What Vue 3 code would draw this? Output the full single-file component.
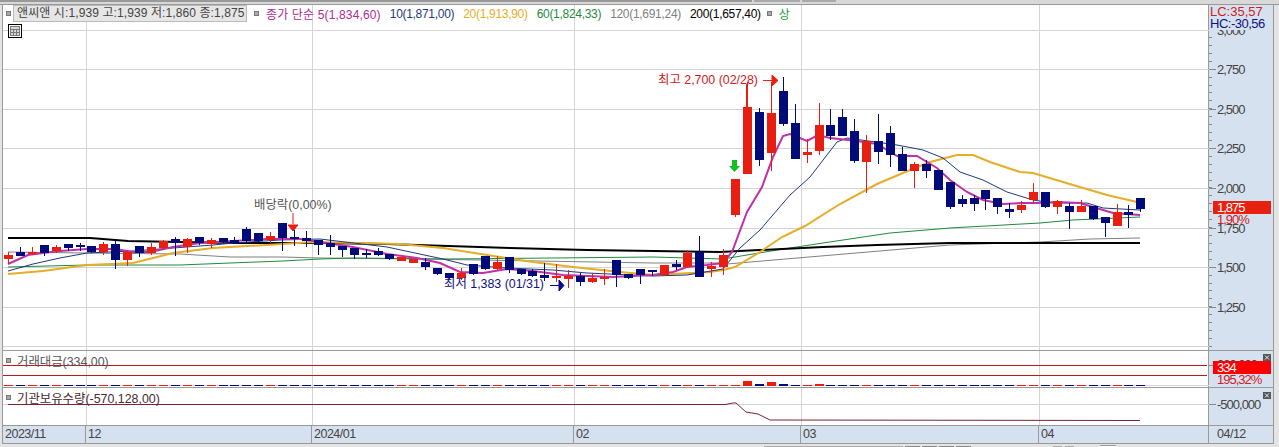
<template>
  <div class="screen">
    <div class="top-strip">
      <span class="top-tab dark"></span>
      <span class="top-tab tab-b"></span>
      <span class="top-tab tab-c"></span>
    </div>
    <div class="pane main-pane">
      <div class="plot">
        <svg class="canvas" viewBox="3 5 1206 345" width="1206" height="345">
          <line v-for="y in mainGrid" :key="'h' + y" x1="3" x2="1209" :y1="y + 0.5" :y2="y + 0.5" class="grid" />
          <line v-for="x in monthLines" :key="'v' + x" :x1="x + 0.5" :x2="x + 0.5" y1="5" y2="350" class="grid" />
          <polyline v-for="ma in movingAverages" :key="ma.name" :points="ma.points" fill="none" :stroke="ma.color" :stroke-width="ma.width" />
          <g v-for="c in candles" :key="c.i">
            <line :x1="c.x + 0.5" :x2="c.x + 0.5" :y1="c.high" :y2="c.low" :stroke="c.color" />
            <rect :x="c.x - 4" :y="c.top" width="9" :height="c.h" :fill="c.color" />
          </g>

          <text x="254" y="209" class="note gray">배당락(0,00%)</text>
          <path d="M293 213v11M288 225h10l-5 6z" class="red-mark" />
          <text x="658" y="84" class="note red">최고 2,700 (02/28)</text>
          <path d="M763 80.500h9M772 75l6 5.500-6 5.500z" class="red-mark" />
          <line x1="746.500" x2="746.500" y1="84" y2="108" stroke="#e81e10" />
          <text x="444" y="288" class="note navy">최저 1,383 (01/31)</text>
          <path d="M550 285.500h9M559 280l5 5.500-5 5.500z" class="navy-mark" />
          <path d="M732 160h5v6h3l-5.500 6-5.500-6h3z" fill="#10c020" />
        </svg>
        <div class="legend">
          <span class="bullet"></span>
          <span class="price-box">앤씨앤 시:1,939 고:1,939 저:1,860 종:1,875</span>
          <span class="bullet second"></span>
          <span class="ma-label c-ma5">종가 단순 5(1,834,60)</span>
          <span class="ma-label c-ma10">10(1,871,00)</span>
          <span class="ma-label c-ma20">20(1,913,90)</span>
          <span class="ma-label c-ma60">60(1,824,33)</span>
          <span class="ma-label c-ma120">120(1,691,24)</span>
          <span class="ma-label c-ma200">200(1,657,40)</span>
          <span class="bullet third"></span>
          <span class="ma-label c-up">상</span>
        </div>
        <div class="table-btn">
          <svg width="10" height="10" viewBox="0 0 10 10">
            <rect x="0.500" y="0.500" width="9" height="9" fill="#d8d8d8" stroke="#777" />
            <path d="M0 3.500h10M0 6.500h10M3.500 3v7M6.500 3v7" stroke="#777" fill="none" />
          </svg>
        </div>
      </div>
      <div class="axis">
        <svg class="canvas" viewBox="1209 5 64 345" width="64" height="345">
          <line v-for="y in minorTicks" :key="y" x1="1209" x2="1212" :y1="y + 0.5" :y2="y + 0.5" class="tick" />
          <g v-for="t in priceTicks" :key="t.label">
            <line x1="1209" x2="1216" :y1="t.y + 0.5" :y2="t.y + 0.5" class="tick" />
            <text x="1217" :y="t.y + 5" class="axis-text">{{ t.label }}</text>
          </g>
          <text x="1217" y="35" class="axis-text">3,000</text>
          <rect x="1209" y="5" width="64" height="25" class="axis-bg" />
          <text x="1210" y="16" class="head-text red">LC:35,57</text>
          <text x="1210" y="28" class="head-text navy tight">HC:-30,56</text>
          <rect x="1213" y="201" width="58" height="13" fill="#e8200f" />
          <text x="1217" y="212" class="axis-text white">1,875</text>
          <text x="1217" y="224" class="axis-text red">1,90%</text>
        </svg>
      </div>
    </div>

    <div class="pane volume-pane">
      <div class="plot">
        <svg class="canvas" viewBox="3 351 1206 36" width="1206" height="36">
          <line v-for="x in monthLines" :key="'v' + x" :x1="x + 0.5" :x2="x + 0.5" y1="351" y2="387" class="grid" />
          <line x1="3" x2="1209" y1="385.500" y2="385.500" class="grid" />
          <line x1="3" x2="1207" y1="365.500" y2="365.500" stroke="#c01818" />
          <line x1="3" x2="1207" y1="375.500" y2="375.500" stroke="#c01818" />
          <rect v-for="b in volumeBars" :key="b.i" :x="b.x - 4" :y="b.y" width="9" :height="b.h" :fill="b.color" />
        </svg>
        <div class="pane-title"><span class="bullet"></span><span class="title-text">거래대금(334,00)</span></div>
      </div>
      <div class="axis">
        <svg class="canvas" viewBox="1209 351 64 36" width="64" height="36">
          <line x1="1209" x2="1216" y1="365.500" y2="365.500" class="tick" />
          <text x="1217" y="369" class="axis-text">330,000</text>
          <rect x="1213" y="361" width="58" height="13" fill="#ff0000" />
          <text x="1217" y="372" class="axis-text white">334</text>
          <text x="1217" y="384" class="axis-text red">195,32%</text>
          <g transform="translate(1263 354)">
            <rect width="8" height="7" fill="#555" />
            <path d="M2 1.500l4 4M6 1.500l-4 4" stroke="#eee" fill="none" />
          </g>
        </svg>
      </div>
    </div>

    <div class="pane inst-pane">
      <div class="plot">
        <svg class="canvas" viewBox="3 388 1206 37" width="1206" height="37">
          <line v-for="x in monthLines" :key="'v' + x" :x1="x + 0.5" :x2="x + 0.5" y1="388" y2="425" class="grid" />
          <line x1="3" x2="1209" y1="404.500" y2="404.500" class="grid" />
          <polyline :points="instLine" fill="none" stroke="#7a2430" />
        </svg>
        <div class="pane-title"><span class="bullet"></span><span class="title-text dark">기관보유수량(-570,128,00)</span></div>
      </div>
      <div class="axis">
        <svg class="canvas" viewBox="1209 388 64 37" width="64" height="37">
          <line x1="1209" x2="1216" y1="404.500" y2="404.500" class="tick" />
          <text x="1217" y="409" class="axis-text">-500,000</text>
          <g transform="translate(1263 392)">
            <rect width="8" height="7" fill="#555" />
            <path d="M2 1.500l4 4M6 1.500l-4 4" stroke="#eee" fill="none" />
          </g>
        </svg>
      </div>
    </div>

    <div class="time-axis">
      <div v-for="m in months" :key="m.label" class="month" :style="{ width: m.width + 'px' }">{{ m.label }}</div>
      <div class="month last">04/12</div>
    </div>
    <div class="bottom-strip">
      <span class="status-input"></span>
      <span class="status-btn"></span>
      <span class="status-btn"></span>
      <span class="status-btn"></span>
      <span class="status-btn"></span>
      <span class="status-icon first"></span>
      <span class="status-icon"></span>
      <span class="status-tab"></span>
    </div>
  </div>
</template>

<script setup>
// [high, top, bottom, low, up?]  픽셀 좌표 기준 캔들 데이터
const raw = [
  [252,255,259,264,1],[247,252,256,256,0],[247,252,253,255,1],[245,245,253,256,0],[245,247,251,253,1],
  [244,244,248,251,0],[243,245,247,251,0],[246,246,252,253,0],[242,244,252,255,1],[240,244,260,269,0],
  [250,252,260,266,1],[246,246,253,257,0],[243,247,253,255,1],[240,241,248,250,1],[237,239,243,256,0],
  [238,239,247,253,1],[237,237,243,245,0],[238,240,244,248,1],[238,238,242,243,0],[237,240,243,244,0],
  [227,229,241,243,0],[233,233,241,243,0],[232,236,240,243,1],[223,223,238,251,0],[230,237,239,246,0],
  [231,238,241,247,0],[240,240,245,255,0],[235,243,247,255,0],[246,246,250,257,0],[248,248,255,259,0],
  [249,253,255,258,0],[248,251,255,256,0],[254,254,259,260,0],[257,257,261,261,1],[259,259,263,263,1],
  [258,262,267,270,0],[268,268,274,275,0],[273,273,278,279,0],[268,273,278,280,1],[264,264,274,275,0],
  [256,256,269,270,0],[256,262,269,270,1],[257,257,270,273,0],[269,269,274,275,0],[269,271,276,277,0],
  [263,275,278,281,0],[264,276,278,282,1],[270,276,279,288,1],[273,276,282,286,0],[273,278,282,283,1],
  [269,277,279,285,1],[260,260,275,287,0],[274,274,278,279,0],[269,269,275,284,0],[270,270,272,276,0],
  [265,265,275,276,1],[260,264,267,270,0],[250,253,267,268,1],[236,252,277,277,0],[262,266,269,277,1],
  [249,255,267,275,1],[179,179,215,217,1],[82,107,174,174,1],[108,112,160,166,0],[82,113,153,171,1],
  [77,91,124,126,0],[104,123,159,159,0],[139,152,155,163,1],[103,125,151,155,1],[109,125,136,140,0],
  [109,117,136,136,0],[119,131,161,163,0],[135,141,162,193,1],[114,141,152,164,0],[126,133,155,167,0],
  [147,154,171,171,0],[162,164,171,188,1],[160,164,171,178,0],[170,170,190,190,0],[182,182,207,209,0],
  [195,199,204,207,0],[195,198,204,211,0],[190,190,199,210,0],[198,198,207,214,0],[203,209,212,218,0],
  [201,205,210,213,1],[183,192,200,203,1],[192,192,207,208,0],[200,201,207,214,1],[203,206,212,229,0],
  [200,206,212,212,1],[206,206,219,220,0],[217,217,223,237,0],[204,212,226,226,1],[205,212,215,228,0],
  [198,198,209,212,0]
]
const RED = '#e81e10'
const NAVY = '#000a78'
const xOf = (i) => Math.round(8 + i * 11.92)
const candles = raw.map(([high, top, bottom, low, up], i) => ({
  i, x: xOf(i), high, low, top, h: Math.max(bottom - top, 2), color: up ? RED : NAVY
}))

const mainGrid = [30, 69, 109, 148, 188, 228, 267, 307, 346]
const monthLines = [86, 312, 574, 801, 1039]

const toPoints = (pts) => pts.map((p) => p.join(',')).join(' ')
const movingAverages = [
  { name: '120', color: '#808080', width: 1, points: toPoints([[8,252],[87,253],[180,254],[230,257],[283,257],[320,258],[420,259],[653,263],[720,263],[727,264],[950,245],[1040,242],[1090,239],[1140,238]]) },
  { name: '60', color: '#1f8a3c', width: 1, points: toPoints([[8,267],[87,265],[180,265],[230,263],[283,261],[320,259],[353,258],[450,259],[653,257],[723,259],[777,250],[823,243],[890,233],[950,228],[1040,223],[1073,220],[1140,217]]) },
  { name: '200', color: '#000', width: 2, points: toPoints([[8,238],[90,238],[128,241],[233,243],[320,243],[387,244],[510,248],[587,250],[720,252],[823,247],[877,245],[950,243],[1140,243]]) },
  { name: '20', color: '#e6ad26', width: 2, points: toPoints([[8,274],[43,271],[87,265],[133,263],[173,253],[213,248],[267,245],[313,242],[400,244],[443,248],[487,255],[533,262],[573,267],[620,272],[653,275],[710,272],[723,270],[735,267],[760,252],[782,237],[805,226],[840,204],[877,184],[910,170],[930,162],[957,155],[973,155],[990,162],[1020,172],[1033,173],[1073,185],[1107,195],[1137,202]]) },
  { name: '10', color: '#1c3a80', width: 1, points: toPoints([[8,271],[33,264],[60,258],[87,253],[133,251],[173,248],[213,245],[233,243],[280,240],[320,239],[387,247],[443,259],[467,265],[507,268],[553,270],[587,273],[653,276],[687,275],[723,269],[740,248],[760,230],[790,195],[810,177],[837,142],[847,138],[897,145],[923,150],[943,158],[960,172],[983,180],[1007,192],[1033,200],[1053,203],[1087,203],[1103,208],[1140,210]]) },
  { name: '5', color: '#c030a8', width: 2, points: toPoints([[8,264],[28,255],[43,253],[60,251],[87,249],[115,249],[133,252],[150,252],[173,247],[200,243],[233,241],[267,239],[300,239],[320,242],[353,247],[387,254],[417,258],[440,263],[460,272],[483,273],[507,269],[533,271],[563,275],[613,277],[653,275],[673,272],[687,267],[707,265],[723,263],[732,252],[747,212],[762,187],[773,157],[783,136],[790,134],[807,141],[818,135],[830,138],[857,141],[877,144],[897,156],[917,156],[937,168],[950,180],[967,192],[983,200],[1003,204],[1023,203],[1037,203],[1057,202],[1080,203],[1093,207],[1113,213],[1140,215]]) }
]

const priceTicks = [
  { y: 69, label: '2,750' }, { y: 109, label: '2,500' }, { y: 148, label: '2,250' }, { y: 188, label: '2,000' },
  { y: 228, label: '1,750' }, { y: 267, label: '1,500' }, { y: 307, label: '1,250' }
]
const minorTicks = []
for (let y = 37; y < 346; y += 7.92) minorTicks.push(Math.round(y))

// 거래대금 막대: 평소에는 납작한 점선처럼 보임
const tallBars = { 62: 5, 63: 2, 64: 4, 65: 2, 68: 2 }
const volumeBars = raw.map((r, i) => {
  const h = tallBars[i] || 1
  return { i, x: xOf(i), y: 386 - h, h, color: r[4] ? RED : NAVY }
})

const instLine = toPoints([[8,404.5],[725,404.5],[733,403],[736,403],[746,412],[758,414],[770,420],[1140,420.5]])

const months = [
  { label: '2023/11', width: 83 },
  { label: '12', width: 226 },
  { label: '2024/01', width: 262 },
  { label: '02', width: 227 },
  { label: '03', width: 238 },
  { label: '04', width: 170 }
]
</script>

<style scoped>
.screen {
  width: 1279px;
  height: 447px;
  overflow: hidden;
  background: #e4e4e4;
  font-family: "Liberation Sans", "Noto Sans CJK KR", sans-serif;
  font-size: 12px;
  display: flex;
  flex-direction: column;
}
.top-strip {
  flex: none;
  height: 4px;
  background: #d8d8d8;
  border-bottom: 1px solid #999;
  display: flex;
  align-items: flex-start;
}
.top-tab { height: 2px; background: #aaa; }
.top-tab.dark { width: 752px; background: #999; }
.tab-b { width: 46px; margin-left: 2px; }
.tab-c { width: 34px; margin-left: 2px; }
.pane {
  flex: none;
  display: flex;
  margin-left: 2px;
  border-left: 1px solid #999;
  width: 1270px;
  border-right: 1px solid #999;
  border-bottom: 1px solid #999;
  background: #fff;
}
.main-pane { height: 345px; }
.volume-pane { height: 36px; }
.inst-pane { height: 37px; }
.plot {
  position: relative;
  width: 1206px;
  flex-shrink: 0;
}
.axis {
  width: 64px;
  background: #d6e1ef;
  box-shadow: -1px 0 0 #999;
  overflow: hidden;
}
.canvas { display: block; }
.grid { stroke: #d4d4d4; }
.tick { stroke: #888; }
.axis-bg { fill: #d6e1ef; }
.axis-text { font-size: 13px; letter-spacing: -1px; fill: #444; }
.head-text { font-size: 13px; }
.tight { letter-spacing: -0.5px; }
.note { font-size: 12.4px; }
.gray { fill: #555; }
.axis-text.red, .red { fill: #d02020; }
.navy { fill: #101080; }
.axis-text.white { fill: #fff; }
.red-mark { fill: #e81e10; stroke: #e81e10; }
.navy-mark { fill: #0a0a90; stroke: #0a0a90; }
.legend {
  position: absolute;
  top: 0;
  left: 3px;
  display: flex;
  align-items: center;
  height: 17px;
  font-size: 12px;
  letter-spacing: -0.3px;
  white-space: nowrap;
}
.bullet {
  width: 5px;
  height: 5px;
  box-sizing: border-box;
  background: #aaa;
  border: 1px solid #777;
  flex-shrink: 0;
}
.price-box {
  margin-left: 2px;
  width: 229px;
  height: 15px;
  line-height: 15px;
  background: #e6e6e6;
  border: 1px solid #bbb;
  color: #444;
  padding-left: 3px;
  overflow: hidden;
  letter-spacing: 0.1px;
}
.second { margin-left: 7px; }
.third { margin-left: 6px; }
.ma-label { margin-left: 9px; }
.c-ma5 { color: #b02a98; margin-left: 7px; letter-spacing: 0.15px; }
.c-ma10 { color: #1c3a80; }
.c-ma20 { color: #e6ad26; }
.c-ma60 { color: #1f8a3c; }
.c-ma120 { color: #808080; }
.c-ma200 { color: #000; }
.c-up { color: #20a030; margin-left: 7px; }
.table-btn {
  position: absolute;
  left: 5px;
  top: 19px;
  width: 10px;
  height: 10px;
  padding: 1px;
  border: 1px solid #000;
  background: #fff;
  line-height: 0;
}
.pane-title {
  position: absolute;
  top: 1px;
  left: 3px;
  display: flex;
  align-items: center;
  height: 17px;
}
.title-text { margin-left: 6px; font-size: 12.4px; color: #555; }
.title-text.dark { color: #4a2a30; }
.time-axis {
  flex: none;
  display: flex;
  margin-left: 2px;
  width: 1270px;
  height: 17px;
  background: #d6e1ef;
  border: 1px solid #999;
  border-top: none;
  font-size: 12.5px;
  letter-spacing: -0.5px;
  color: #444;
  line-height: 17px;
}
.month {
  padding-left: 2px;
  border-right: 1px solid #999;
  box-sizing: border-box;
  flex-shrink: 0;
  white-space: nowrap;
}
.month.last { border-right: none; padding-left: 8px; }
.bottom-strip {
  flex: 1;
  min-height: 0;
  overflow: hidden;
  background: #e4e4e4;
  display: flex;
  align-items: flex-start;
  padding: 2px 0 0 764px;
}
.status-input {
  width: 139px;
  height: 4px;
  background: #fff;
  border-top: 1px solid #aaa;
}
.status-btn {
  width: 15px;
  height: 4px;
  margin-left: 2px;
  background: #eee;
  border-top: 1px solid #888;
}
.status-icon {
  width: 9px;
  height: 2px;
  margin-left: 3px;
  background: #aaa;
}
.status-icon.first { margin-left: 82px; }
.status-tab {
  width: 16px;
  height: 3px;
  margin-left: 26px;
  margin-top: -1px;
  background: #fff;
  border-top: 1px solid #999;
}
</style>
